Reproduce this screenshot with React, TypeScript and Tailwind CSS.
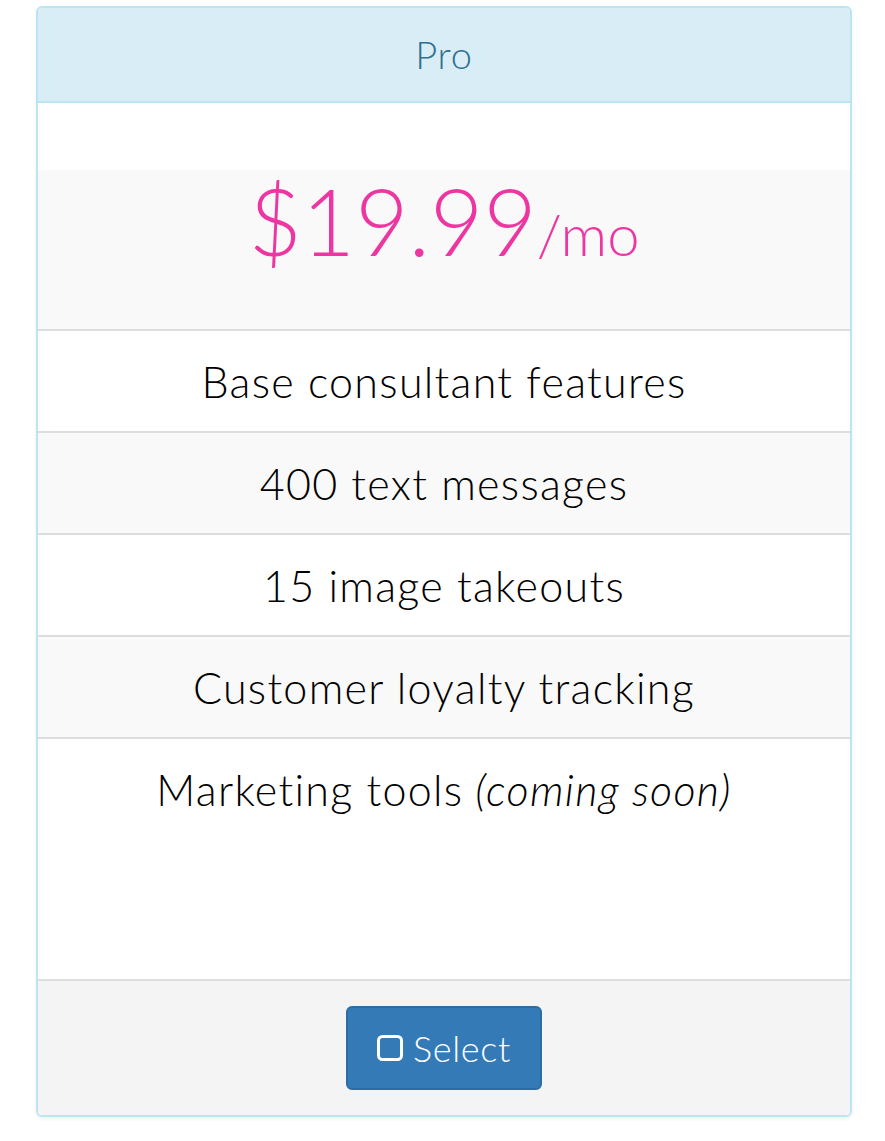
import React from "react";

const features: { text: string; note?: string }[] = [
  { text: "Base consultant features" },
  { text: "400 text messages" },
  { text: "15 image takeouts" },
  { text: "Customer loyalty tracking" },
  { text: "Marketing tools", note: "(coming soon)" },
];

const App: React.FC = () => {
  return (
    <div className="min-h-[1141px] bg-white pt-[6px] pl-[36px] font-['Lato',sans-serif]">
      <div className="w-[816px] rounded-[6px] border-2 border-[#b9e6f0] overflow-hidden shadow-[0_2px_4px_rgba(0,0,0,0.06)]">
        {/* heading */}
        <div className="h-[95px] bg-[#d9edf7] border-b-2 border-[#b9e6f0] flex items-center justify-center">
          <span className="text-[38px] tracking-[0.02em] text-[#31708f] font-light">Pro</span>
        </div>
        <div className="h-[67px] bg-white" />

        {/* price */}
        <div className="h-[161px] bg-[#f9f9f9] border-b-2 border-[#ddd] flex justify-center">
          <p className="text-[#ee36a3] font-light leading-none mt-[5px]">
            <span className="text-[92px]">$19.99</span>
            <span className="text-[58px]">/mo</span>
          </p>
        </div>

        {/* features */}
        {features.map((f, i) => (
          <div
            key={i}
            className={`${i % 2 === 1 ? "bg-[#f9f9f9]" : "bg-white"} ${
              i === features.length - 1 ? "h-[242px]" : "h-[102px]"
            } border-b-2 border-[#ddd] pt-[31px] text-center text-[43px] tracking-[0.03em] leading-[40px] text-black font-light`}
          >
            {f.text}
            {f.note && <em className="ml-[12px]">{f.note}</em>}
          </div>
        ))}

        {/* footer */}
        <div className="h-[134px] bg-[#f4f4f4] flex items-center justify-center">
          <button className="w-[196px] h-[84px] rounded-[6px] bg-[#337ab7] border-2 border-[#2e6da4] text-white text-[36px] tracking-[0.02em] font-light flex items-center justify-center gap-[10px]">
            <svg width="26" height="26" viewBox="0 0 26 26">
              <rect x="1.5" y="1.5" width="23" height="23" rx="4" fill="none" stroke="white" strokeWidth="3" />
            </svg>
            Select
          </button>
        </div>
      </div>
    </div>
  );
};

export default App;
